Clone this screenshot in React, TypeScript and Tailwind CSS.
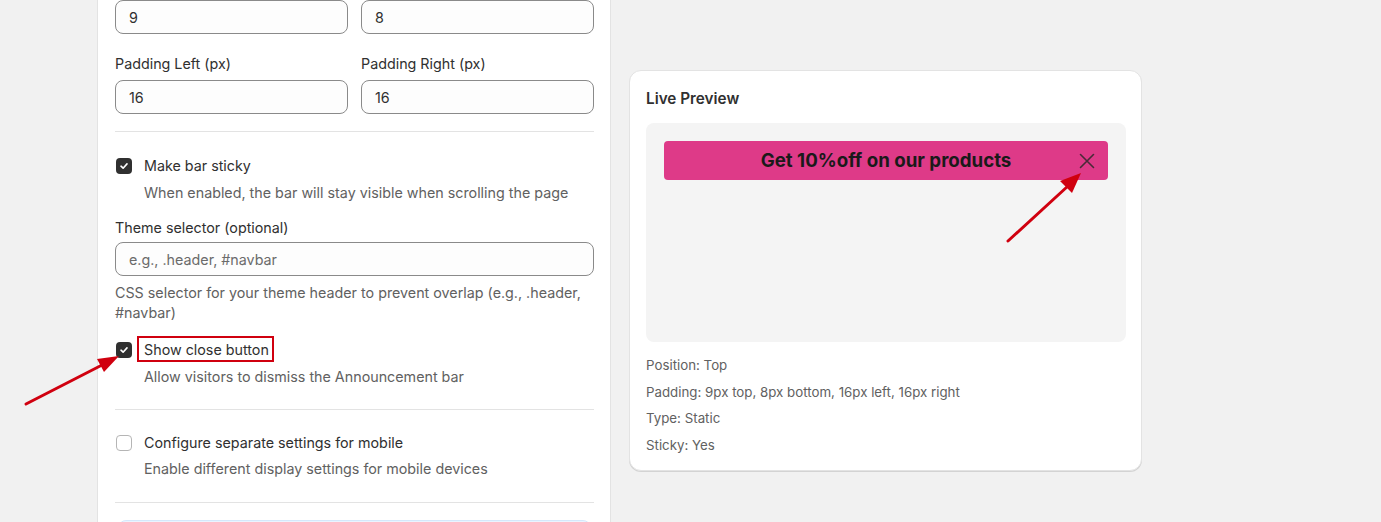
import React from "react";

const font = { fontFamily: "Inter, 'Noto Sans', sans-serif" };

function Input({ value, placeholder }: { value?: string; placeholder?: string }) {
  return (
    <div className="h-[34px] w-full rounded-lg border border-[#8a8a8a] bg-[#fdfdfd] pl-[13px] flex items-center text-[14.3px] leading-5">
      {value ? (
        <span className="pt-px text-[#303030]">{value}</span>
      ) : (
        <span className="pt-px text-[#6b6b6b]">{placeholder}</span>
      )}
    </div>
  );
}

function Check({ checked }: { checked: boolean }) {
  return checked ? (
    <span className="flex h-4 w-4 shrink-0 items-center justify-center rounded-[4px] bg-[#303030]">
      <svg width="10" height="10" viewBox="0 0 10 10" fill="none">
        <path d="M2 5.2 4.1 7.2 8 2.9" stroke="white" strokeWidth="1.6" strokeLinecap="round" strokeLinejoin="round" />
      </svg>
    </span>
  ) : (
    <span className="h-4 w-4 shrink-0 rounded-[4px] border border-[#b5b5b5] bg-white" />
  );
}

export default function App() {
  return (
    <div className="relative h-[522px] w-[1381px] overflow-hidden bg-[#f1f1f1] text-[#303030]" style={font}>
      <div className="flex items-start gap-[18px] pl-[97px]">
        {/* Left settings panel */}
        <div className="w-[514px] h-[540px] border-x border-[#e3e3e3] bg-white pl-[17px] pr-[16px]">
          <div className="grid grid-cols-2 gap-x-[13px]">
            <Input value="9" />
            <Input value="8" />
            <div className="mt-[20px] h-[19px] text-[14.3px] leading-5 text-[#303030]">Padding Left (px)</div>
            <div className="mt-[20px] h-[19px] text-[14.3px] leading-5 text-[#303030]">Padding Right (px)</div>
            <div className="mt-[7px]"><Input value="16" /></div>
            <div className="mt-[7px]"><Input value="16" /></div>
          </div>
          <div className="mt-[17px] h-px bg-[#e3e3e3]" />

          <div className="mt-[24px] flex h-[19px] items-center gap-3 pl-px">
            <Check checked />
            <span className="text-[14.3px] leading-5">Make bar sticky</span>
          </div>
          <div className="mt-[8px] pl-[29px] text-[14.3px] leading-5 text-[#616161]">
            When enabled, the bar will stay visible when scrolling the page
          </div>

          <div className="mt-[15px] h-[19px] text-[14.3px] leading-5">Theme selector (optional)</div>
          <div className="mt-[5px]"><Input placeholder="e.g., .header, #navbar" /></div>
          <div className="mt-[7px] text-[14.3px] leading-5 text-[#616161]">
            CSS selector for your theme header to prevent overlap (e.g., .header, #navbar)
          </div>

          <div className="mt-[17px] flex h-[19px] items-center gap-3 pl-px">
            <Check checked />
            <span className="relative text-[14.3px] leading-5">
              Show close button
              <span className="absolute -left-[7px] -right-[5px] -top-[4px] -bottom-[2px] border-2 border-[#d0000f]" />
            </span>
          </div>
          <div className="mt-[8px] pl-[29px] text-[14.3px] leading-5 text-[#616161]">
            Allow visitors to dismiss the Announcement bar
          </div>
          <div className="mt-[22px] h-px bg-[#e3e3e3]" />

          <div className="mt-[23px] flex h-[19px] items-center gap-3 pl-px">
            <Check checked={false} />
            <span className="text-[14.3px] leading-5">Configure separate settings for mobile</span>
          </div>
          <div className="mt-[7px] pl-[29px] text-[14.3px] leading-5 text-[#616161]">
            Enable different display settings for mobile devices
          </div>
          <div className="mt-[23px] h-px bg-[#e3e3e3]" />
          <div className="mx-[3px] mt-[17px] h-[40px] rounded-lg border border-[#d5e8fb] bg-[#eaf4ff]" />
        </div>

        {/* Right preview card */}
        <div className="mt-[70px] w-[513px] rounded-xl border border-[#e3e3e3] bg-white pl-[16px] pr-[15px] pt-[18px] pb-[15px] shadow-[0_1px_0_rgba(0,0,0,0.12)]">
          <div className="h-[19px] text-[15.3px] font-semibold leading-5 text-[#303030]">Live Preview</div>
          <div className="mt-[15px] h-[219px] rounded-lg bg-[#f4f4f4] p-[18px]">
            <div className="relative flex h-[39px] items-center justify-center rounded-[4px] bg-[#de3a88]">
              <span className="pt-px text-[18.7px] font-bold leading-6 text-[#1a1a1a]">Get 10%off on our products</span>
              <svg className="absolute right-[13px] top-1/2 -translate-y-1/2" width="16" height="16" viewBox="0 0 16 16" fill="none">
                <path d="M1.5 1.5 14.5 14.5M14.5 1.5 1.5 14.5" stroke="#4a2a38" strokeWidth="1.6" strokeLinecap="round" />
              </svg>
            </div>
          </div>
          <div className="mt-[13px] flex flex-col gap-[6.6px] text-[13.3px] leading-5 text-[#616161]">
            <div>Position: Top</div>
            <div>Padding: 9px top, 8px bottom, 16px left, 16px right</div>
            <div>Type: Static</div>
            <div>Sticky: Yes</div>
          </div>
        </div>
      </div>

      {/* Annotation arrows */}
      <svg className="pointer-events-none absolute left-0 top-0" width="1381" height="522" viewBox="0 0 1381 522">
        <line x1="26" y1="404" x2="104" y2="364" stroke="#d0000f" strokeWidth="3" strokeLinecap="round" />
        <polygon points="119,356 97,359 104,372" fill="#d0000f" />
        <line x1="1008" y1="241" x2="1068" y2="186" stroke="#d0000f" strokeWidth="3" strokeLinecap="round" />
        <polygon points="1081,173 1060,181 1072,193" fill="#d0000f" />
      </svg>
    </div>
  );
}
